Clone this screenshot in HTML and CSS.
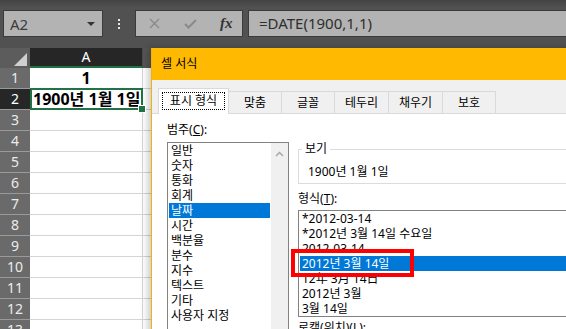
FILE: index.html
```html
<!DOCTYPE html>
<html lang="ko">
<head>
    <meta charset="UTF-8">
    <title>셀 서식</title>
    <link rel="stylesheet" href="styles.css">
</head>
<body>
    <!-- Formula Bar -->
    <div class="topbar">
        <div class="name-box"><span>A2</span><span class="caret"></span></div>
        <div class="grip"><i></i><i></i><i></i></div>
        <div class="fx-buttons">
            <svg class="ico-x" width="11" height="11" viewBox="0 0 11 11"><path d="M1 1L10 10M10 1L1 10" stroke="#8a8a8a" stroke-width="1.4" fill="none"/></svg>
            <svg class="ico-ok" width="13" height="10" viewBox="0 0 13 10"><path d="M1 5L4.5 8.5L12 1" stroke="#8a8a8a" stroke-width="2" fill="none"/></svg>
            <span class="fx">fx</span>
        </div>
        <div class="formula">=DATE(1900,1,1)</div>
    </div>

    <!-- Sheet Grid -->
    <div class="sheet">
        <div class="row head">
            <div class="rh corner"><span class="tri"></span></div>
            <div class="cell col-sel">A</div>
            <div class="rest"></div>
        </div>
        <div class="row"><div class="rh">1</div><div class="cell">1</div><div class="rest"></div></div>
        <div class="row"><div class="rh row-sel">2</div><div class="cell sel">1900년 1월 1일</div><div class="rest"></div></div>
        <div class="row"><div class="rh">3</div><div class="cell"></div><div class="rest"></div></div>
        <div class="row"><div class="rh">4</div><div class="cell"></div><div class="rest"></div></div>
        <div class="row"><div class="rh">5</div><div class="cell"></div><div class="rest"></div></div>
        <div class="row"><div class="rh">6</div><div class="cell"></div><div class="rest"></div></div>
        <div class="row"><div class="rh">7</div><div class="cell"></div><div class="rest"></div></div>
        <div class="row"><div class="rh">8</div><div class="cell"></div><div class="rest"></div></div>
        <div class="row"><div class="rh">9</div><div class="cell"></div><div class="rest"></div></div>
        <div class="row"><div class="rh">10</div><div class="cell"></div><div class="rest"></div></div>
        <div class="row"><div class="rh">11</div><div class="cell"></div><div class="rest"></div></div>
        <div class="row"><div class="rh">12</div><div class="cell"></div><div class="rest"></div></div>
        <div class="row"><div class="rh">13</div><div class="cell"></div><div class="rest"></div></div>
    </div>

    <!-- Format Cells Dialog -->
    <div class="dialog">
        <div class="title">셀 서식</div>
        <div class="tabs">
            <div class="tab active" style="width:71px"><span class="focus">표시 형식</span></div>
            <div class="tab" style="width:54px">맞춤</div>
            <div class="tab" style="width:54px">글꼴</div>
            <div class="tab" style="width:55px">테두리</div>
            <div class="tab" style="width:55px">채우기</div>
            <div class="tab" style="width:54px">보호</div>
        </div>
        <div class="panel">
            <div class="col-left">
                <div class="label">범주(<u>C</u>):</div>
                <div class="cat-list">
                    <div class="items">
                        <div class="item">일반</div>
                        <div class="item">숫자</div>
                        <div class="item">통화</div>
                        <div class="item">회계</div>
                        <div class="item on">날짜</div>
                        <div class="item">시간</div>
                        <div class="item">백분율</div>
                        <div class="item">분수</div>
                        <div class="item">지수</div>
                        <div class="item">텍스트</div>
                        <div class="item">기타</div>
                        <div class="item">사용자 지정</div>
                    </div>
                    <div class="scroll">
                        <svg width="9" height="6" viewBox="0 0 9 6"><path d="M1 5L4.5 1.5L8 5" stroke="#a8a8a8" stroke-width="1.5" fill="none"/></svg>
                    </div>
                </div>
            </div>
            <div class="col-right">
                <fieldset class="sample">
                    <legend>보기</legend>
                    <div class="sample-text">1900년 1월 1일</div>
                </fieldset>
                <div class="label gap">형식(<u>T</u>):</div>
                <div class="fmt-list">
                    <div class="item">*2012-03-14</div>
                    <div class="item">*2012년 3월 14일 수요일</div>
                    <div class="item">2012-03-14</div>
                    <div class="item on">2012년 3월 14일</div>
                    <div class="item">12年 3月 14日</div>
                    <div class="item">2012년 3월</div>
                    <div class="item">3월 14일</div>
                    <span class="mark"></span>
                </div>
                <div class="label small-gap">로캘(위치)(<u>L</u>):</div>
            </div>
        </div>
    </div>
</body>
</html>
```

FILE: styles.css
```css
/* Reset */
* {
    margin: 0;
    padding: 0;
    box-sizing: border-box;
}

body {
    width: 566px;
    height: 329px;
    overflow: hidden;
    position: relative;
    background: #fff;
    font-family: "Noto Sans", "Noto Sans CJK KR", sans-serif;
}

/* Formula Bar */
.topbar {
    height: 48px;
    display: flex;
    align-items: flex-start;
    padding: 10px 0 0 3px;
    background: linear-gradient(to bottom, #434343 0, #515151 8px, #515151 100%);
}

.name-box,
.fx-buttons,
.formula {
    height: 27px;
    background: #b3b3b3;
    border: 1px solid #3b3b3b;
}

.name-box {
    width: 100px;
    display: flex;
    align-items: center;
    padding: 0 7px 0 6px;
    font-size: 15px;
    color: #3c3c3c;
}

.caret {
    margin-left: auto;
    border-left: 4px solid transparent;
    border-right: 4px solid transparent;
    border-top: 4px solid #333;
}

.grip {
    width: 32px;
    height: 27px;
    display: flex;
    flex-direction: column;
    align-items: center;
    justify-content: center;
    gap: 2px;
}

.grip i {
    width: 2px;
    height: 2px;
    background: #e6e6e6;
}

.fx-buttons {
    width: 108px;
    display: flex;
    align-items: center;
    padding-left: 13px;
}

.ico-ok {
    margin-left: 24px;
}

.fx {
    margin-left: 23px;
    font-family: "Liberation Serif", serif;
    font-style: italic;
    font-weight: bold;
    font-size: 15px;
    color: #333;
}

.formula {
    flex: 1;
    margin: 0 -6px 0 5px;
    padding-left: 10px;
    font-size: 15px;
    line-height: 25px;
    color: #2e2e2e;
}

/* Sheet */
.row {
    display: flex;
    height: 21px;
}

.row.head {
    height: 20px;
}

.rh {
    width: 30px;
    background: #6a6a6a;
    color: #ececec;
    font-size: 14px;
    line-height: 20px;
    text-align: center;
    border-bottom: 1px solid #9a9a9a;
}

.rh.row-sel {
    background: #262626;
    color: #fff;
}

.corner {
    position: relative;
    background: #5c5c5c;
    border-bottom: none;
}

.tri {
    position: absolute;
    right: 3px;
    bottom: 2px;
    border-left: 13px solid transparent;
    border-bottom: 13px solid #cfcfcf;
}

.cell {
    width: 113px;
    border-right: 1px solid #d4d4d4;
    border-bottom: 1px solid #d4d4d4;
    font-weight: bold;
    font-size: 16px;
    line-height: 20px;
    text-align: center;
    color: #000;
    white-space: nowrap;
}

.cell.col-sel {
    background: #262626;
    color: #fff;
    font-weight: normal;
    font-size: 14px;
    line-height: 18px;
    border-right-color: #4a4a4a;
    border-bottom: 2px solid #217346;
}

.cell.sel {
    position: relative;
    text-align: left;
    padding-left: 3px;
}

.cell.sel::after {
    content: "";
    position: absolute;
    top: -1px;
    left: 0;
    right: -1px;
    bottom: -1px;
    border: 2px solid #217346;
}

.cell.sel::before {
    content: "";
    position: absolute;
    right: -4px;
    bottom: -4px;
    width: 6px;
    height: 6px;
    background: #217346;
    border: 1px solid #fff;
    z-index: 1;
}

.rest {
    flex: 1;
    border-bottom: 1px solid #d4d4d4;
}

.head .rest {
    background: #555;
    border-bottom: none;
}

/* Dialog */
.dialog {
    position: absolute;
    left: 151px;
    top: 48px;
    width: 440px;
    height: 300px;
    background: #f0f0f0;
    border-left: 1px solid #f5b400;
    box-shadow: -3px 0 7px rgba(0, 0, 0, 0.22);
    font-size: 12px;
    color: #000;
}

.title {
    height: 32px;
    background: #ffb900;
    padding-left: 9px;
    line-height: 32px;
    font-size: 12px;
}

.tabs {
    display: flex;
    align-items: flex-end;
    height: 33px;
    padding: 8px 0 0 6px;
}

.tab {
    height: 22px;
    margin-right: -1px;
    border: 1px solid #d9d9d9;
    border-bottom: none;
    background: #f0f0f0;
    text-align: center;
    line-height: 21px;
}

.tab.active {
    height: 26px;
    margin-bottom: -1px;
    background: #fff;
    position: relative;
    z-index: 1;
    padding: 3px 3px 0;
}

.focus {
    display: block;
    height: 18px;
    border: 1px dotted #000;
    line-height: 16px;
}

.panel {
    height: 240px;
    background: #fff;
    border-top: 1px solid #d9d9d9;
    display: flex;
    gap: 9px;
    padding: 8px 0 0 15px;
}

.label {
    height: 16px;
    line-height: 16px;
}

.label.gap {
    margin-top: 7px;
}

.label.small-gap {
    margin-top: 3px;
}

.col-left {
    width: 122px;
}

.cat-list {
    margin-top: 4px;
    height: 200px;
    border: 1px solid #828282;
    display: flex;
}

.items {
    flex: 1;
    padding: 0 1px;
}

.item {
    height: 15px;
    line-height: 15px;
    padding-left: 2px;
    white-space: nowrap;
}

.item.on {
    background: #0078d7;
    color: #fff;
}

.scroll {
    width: 17px;
    background: #f0f0f0;
    display: flex;
    justify-content: center;
    padding-top: 8px;
}

.col-right {
    flex: 1;
    margin-top: 19px;
}

.sample {
    border: 1px solid #dcdcdc;
    border-right: none;
    padding: 0 0 3px 3px;
}

.sample legend {
    padding: 0 3px;
    line-height: 16px;
}

.sample-text {
    margin-top: 7px;
    padding-left: 6px;
    line-height: 16px;
}

.fmt-list {
    position: relative;
    margin-top: 3px;
    border: 1px solid #828282;
    border-right: none;
    padding: 0 0 0 1px;
}

.mark {
    position: absolute;
    left: -8px;
    top: 38px;
    width: 123px;
    height: 28px;
    border: 4px solid #f00;
}
```
